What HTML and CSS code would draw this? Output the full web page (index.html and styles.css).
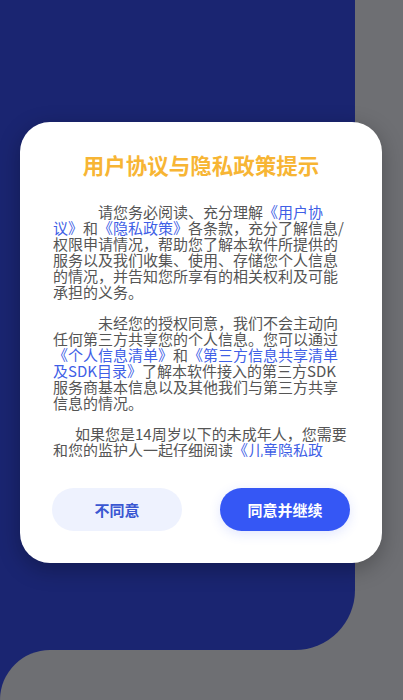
FILE: index.html
```html
<!DOCTYPE html>
<html lang="zh-CN">
<head>
<meta charset="utf-8">
<title>用户协议与隐私政策提示</title>
<link rel="stylesheet" href="styles.css">
</head>
<body>
<div class="screen">
  <div class="bg-top">
    <div class="navy-panel"></div>
    <div class="gray-side"></div>
  </div>
  <div class="bg-bottom">
    <div class="gray-foot"></div>
  </div>

  <div class="dialog">
    <h1 class="title">用户协议与隐私政策提示</h1>
    <div class="content">
      <p class="para indent-lg">请您务必阅读、充分理解<span class="link">《用户协议》</span>和<span class="link">《隐私政策》</span>各条款，充分了解信息/权限申请情况，帮助您了解本软件所提供的服务以及我们收集、使用、存储您个人信息的情况，并告知您所享有的相关权利及可能承担的义务。</p>
      <p class="para indent-lg">未经您的授权同意，我们不会主动向任何第三方共享您的个人信息。您可以通过<span class="link">《个人信息清单》</span>和<span class="link">《第三方信息共享清单及SDK目录》</span>了解本软件接入的第三方SDK服务商基本信息以及其他我们与第三方共享信息的情况。</p>
      <p class="para indent-sm">如果您是14周岁以下的未成年人，您需要和您的监护人一起仔细阅读<span class="link">《儿童隐私政策》</span>，并在征得您的监护人同意后使用我们的产品或服务。</p>
    </div>
    <div class="actions">
      <button class="btn btn-secondary">不同意</button>
      <button class="btn btn-primary">同意并继续</button>
    </div>
  </div>
</div>
</body>
</html>
```

FILE: styles.css
```css
* {
  box-sizing: border-box;
}

html, body {
  margin: 0;
  padding: 0;
}

body {
  font-family: "Noto Sans CJK SC", "Noto Sans", sans-serif;
}

.screen {
  position: relative;
  width: 403px;
  height: 700px;
  overflow: hidden;
  background: #6e6f73;
}

.bg-top {
  display: flex;
  height: 650px;
}

.navy-panel {
  width: 355px;
  height: 100%;
  background: #1a2571;
  border-bottom-right-radius: 60px;
}

.gray-side {
  flex: 1;
  background: #6e6f73;
}

.bg-bottom {
  height: 50px;
  background: #1a2571;
}

.gray-foot {
  height: 100%;
  background: #6e6f73;
  border-top-left-radius: 50px;
}

.dialog {
  position: absolute;
  left: 20px;
  top: 122px;
  width: 362px;
  height: 441px;
  background: #ffffff;
  border-radius: 30px;
  box-shadow: 0 6px 22px rgba(0, 0, 0, 0.28);
  padding: 29px 0 0 0;
  display: flex;
  flex-direction: column;
}

.title {
  margin: 0;
  font-size: 21.5px;
  line-height: 28px;
  font-weight: 700;
  color: #f7b534;
  text-align: center;
}

.content {
  margin: 25px 0 0 33px;
  width: 297px;
  height: 253px;
  overflow: hidden;
  color: #555555;
  font-size: 15px;
  line-height: 16px;
  text-spacing-trim: space-all;
  line-break: loose;
}

.para {
  margin: 0 0 15px 0;
}

.indent-lg {
  text-indent: 45px;
}

.indent-sm {
  text-indent: 22px;
}

.link {
  color: #3f5fe6;
}

.actions {
  display: flex;
  gap: 38px;
  padding: 0 0 0 32px;
  margin-top: 31px;
}

.btn {
  width: 130px;
  height: 43px;
  border: none;
  border-radius: 22px;
  font-family: "Noto Sans CJK SC", "Noto Sans", sans-serif;
  font-size: 15px;
  font-weight: 700;
  padding: 0;
}

.btn-secondary {
  background: #eef2fe;
  color: #3a57d2;
}

.btn-primary {
  background: #3557f5;
  color: #ffffff;
  box-shadow: 0 3px 12px rgba(53, 87, 245, 0.15);
}
```
